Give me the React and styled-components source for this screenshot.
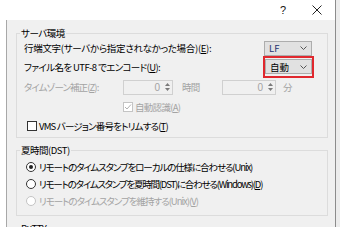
import React from 'react';
import styled, { createGlobalStyle } from 'styled-components';

const GlobalStyle = createGlobalStyle`
  html, body {
    margin: 0;
    padding: 0;
  }
  body {
    width: 340px;
    height: 227px;
    overflow: hidden;
    background: #e4e4e4;
    font-family: 'Noto Sans CJK JP', 'Noto Sans', sans-serif;
  }
`;

const Screen = styled.div`
  display: flex;
  width: 340px;
  height: 227px;
  overflow: hidden;
`;

const Dialog = styled.div`
  width: 335px;
  flex: none;
  display: flex;
  flex-direction: column;
  background: #f0f0f0;
  border-right: 1px solid #8c8c8c;
`;

const BackWindow = styled.div`
  flex: 1;
  background: #ececec;
`;

const TitleBar = styled.div`
  height: 20px;
  flex: none;
  background: #fff;
  display: flex;
  justify-content: flex-end;
  align-items: center;
`;

const TitleButton = styled.div`
  width: ${(p) => p.$w}px;
  height: 20px;
  display: flex;
  align-items: center;
  justify-content: center;
  font: 11px 'Liberation Sans', sans-serif;
  color: #111;
`;

const Body = styled.div`
  flex: 1;
  display: flex;
  min-height: 0;
`;

const TreeEdge = styled.div`
  width: 6px;
  flex: none;
  background: #fff;
  border-right: 1px solid #a8a8a8;
`;

const Panel = styled.div`
  flex: 1;
  padding: 7px 7px 0 9px;
  display: flex;
  flex-direction: column;
  gap: 6px;
`;

const Group = styled.fieldset`
  margin: 0;
  padding: ${(p) => p.$pt || 0}px 7px ${(p) => p.$pb || 0}px 7px;
  border: 1px solid #dcdcdc;
  flex: none;
  min-width: 0;
`;

const Legend = styled.legend`
  padding: 0 1px;
  margin-left: -4px;
  font-size: 9.5px;
  line-height: 12px;
  letter-spacing: -0.5px;
  color: #000;
  font-feature-settings: 'palt';
`;

const Row = styled.div`
  display: flex;
  align-items: center;
  height: ${(p) => p.$h || 20}px;
  padding-left: ${(p) => p.$indent || 0}px;
`;

const Label = styled.span`
  font-size: 9.5px;
  line-height: 12px;
  letter-spacing: ${(p) => (p.$ls !== undefined ? p.$ls : -0.7)}px;
  white-space: nowrap;
  color: ${(p) => (p.$disabled ? '#a3a3a3' : '#000')};
  font-feature-settings: 'palt';
  width: ${(p) => (p.$w ? `${p.$w}px` : 'auto')};
  margin-left: ${(p) => p.$ml || 0}px;
  flex: none;
`;

const Select = styled.div`
  width: ${(p) => p.$w || 48}px;
  height: 15px;
  box-sizing: border-box;
  border: 1px solid #adadad;
  background: #e1e1e1;
  display: flex;
  align-items: center;
  justify-content: space-between;
  padding: 0 4px 0 4px;
  font-size: 9.5px;
  color: ${(p) => (p.$color ? p.$color : '#000')};
  font-feature-settings: 'palt';
`;

const RightSlot = styled.div`
  margin-left: auto;
  margin-right: ${(p) => p.$mr || 0}px;
`;

const Highlight = styled.div`
  margin-left: auto;
  margin-right: 6px;
  height: 22px;
  box-sizing: border-box;
  border: 2px solid #e0282e;
  padding: 1px 0 0 0;
`;

const Spin = styled.div`
  width: ${(p) => p.$w}px;
  height: 15px;
  box-sizing: border-box;
  border: 1px solid #d0d0d0;
  background: #f0f0f0;
  display: flex;
  align-items: center;
  justify-content: flex-end;
  font: 10px 'Liberation Sans', sans-serif;
  color: #a3a3a3;
  flex: none;
`;

const SpinArrows = styled.div`
  width: 8px;
  height: 13px;
  margin: 0 1px 0 3px;
  display: flex;
  flex-direction: column;
  justify-content: center;
  align-items: center;
  gap: 2px;
`;

const Box = styled.div`
  width: 10px;
  height: 10px;
  box-sizing: border-box;
  border: 1px solid ${(p) => (p.$disabled ? '#c4c4c4' : '#333')};
  background: #fff;
  display: flex;
  align-items: center;
  justify-content: center;
  margin-right: 2px;
  flex: none;
`;

const Radio = styled.div`
  width: 10px;
  height: 10px;
  box-sizing: border-box;
  border-radius: 50%;
  border: 1px solid ${(p) => (p.$disabled ? '#c4c4c4' : '#333')};
  background: #fff;
  display: flex;
  align-items: center;
  justify-content: center;
  margin-right: 3px;
  flex: none;

  &::after {
    content: '';
    display: ${(p) => (p.$checked ? 'block' : 'none')};
    width: 4px;
    height: 4px;
    border-radius: 50%;
    background: #222;
  }
`;

const Chevron = () => (
  <svg width="7" height="4" viewBox="0 0 7 4">
    <path d="M0.5 0.5 L3.5 3.5 L6.5 0.5" fill="none" stroke="#555" strokeWidth="1" />
  </svg>
);

const Arrows = () => (
  <SpinArrows>
    <svg width="5" height="3" viewBox="0 0 5 3">
      <path d="M0 3 L2.5 0 L5 3 Z" fill="#7a7a7a" />
    </svg>
    <svg width="5" height="3" viewBox="0 0 5 3">
      <path d="M0 0 L2.5 3 L5 0 Z" fill="#7a7a7a" />
    </svg>
  </SpinArrows>
);

const App = () => (
  <Screen>
    <GlobalStyle />
    <Dialog>
      <TitleBar>
        <TitleButton $w={32}>?</TitleButton>
        <TitleButton $w={36}>
          <svg width="10" height="10" viewBox="0 0 10 10">
            <path d="M0.5 0.5 L9.5 9.5 M9.5 0.5 L0.5 9.5" stroke="#222" strokeWidth="1" />
          </svg>
        </TitleButton>
      </TitleBar>
      <Body>
        <TreeEdge />
        <Panel>
          <Group $pb={1}>
            <Legend>サーバ環境</Legend>
            <Row $h={18}>
              <Label $ls={-0.3}>行端文字(サーバから指定されなかった場合)(<u>E</u>):</Label>
              <RightSlot $mr={8}>
                <Select $color="#1d3270">
                  LF
                  <Chevron />
                </Select>
              </RightSlot>
            </Row>
            <Row>
              <Label $ls={-0.6}>ファイル名を UTF-8 でエンコード(<u>U</u>):</Label>
              <Highlight>
                <Select $w={47}>
                  自動
                  <Chevron />
                </Select>
              </Highlight>
            </Row>
            <Row>
              <Label $w={99} $ls={-0.9} $disabled>タイムゾーン補正(<u>Z</u>):</Label>
              <Spin $w={50}>
                0
                <Arrows />
              </Spin>
              <Label $w={40} $ml={9} $disabled>時間</Label>
              <Spin $w={54}>
                0
                <Arrows />
              </Spin>
              <Label $ml={7} $disabled>分</Label>
            </Row>
            <Row $h={19} $indent={99}>
              <Box $disabled>
                <svg width="8" height="8" viewBox="0 0 8 8">
                  <path d="M1 4 L3 6 L7 1.5" fill="none" stroke="#b0b0b0" strokeWidth="1" />
                </svg>
              </Box>
              <Label $disabled>自動認識(<u>A</u>)</Label>
            </Row>
            <Row $indent={3}>
              <Box />
              <Label $ls={-0.8}>VMS バージョン番号をトリムする(<u>T</u>)</Label>
            </Row>
          </Group>
          <Group $pt={2} $pb={6}>
            <Legend>夏時間(DST)</Legend>
            <Row $h={17} $indent={2}>
              <Radio $checked />
              <Label $ls={-1.1}>リモートのタイムスタンプをローカルの仕様に合わせる(Unix)</Label>
            </Row>
            <Row $h={17} $indent={2}>
              <Radio />
              <Label $ls={-1.2}>リモートのタイムスタンプを夏時間(DST)に合わせる(Windows)(<u>D</u>)</Label>
            </Row>
            <Row $h={17} $indent={2}>
              <Radio $disabled />
              <Label $ls={-1.0} $disabled>リモートのタイムスタンプを維持する(Unix)(<u>V</u>)</Label>
            </Row>
          </Group>
          <Group $pb={20}>
            <Legend>PuTTY</Legend>
          </Group>
        </Panel>
      </Body>
    </Dialog>
    <BackWindow />
  </Screen>
);

export default App;
